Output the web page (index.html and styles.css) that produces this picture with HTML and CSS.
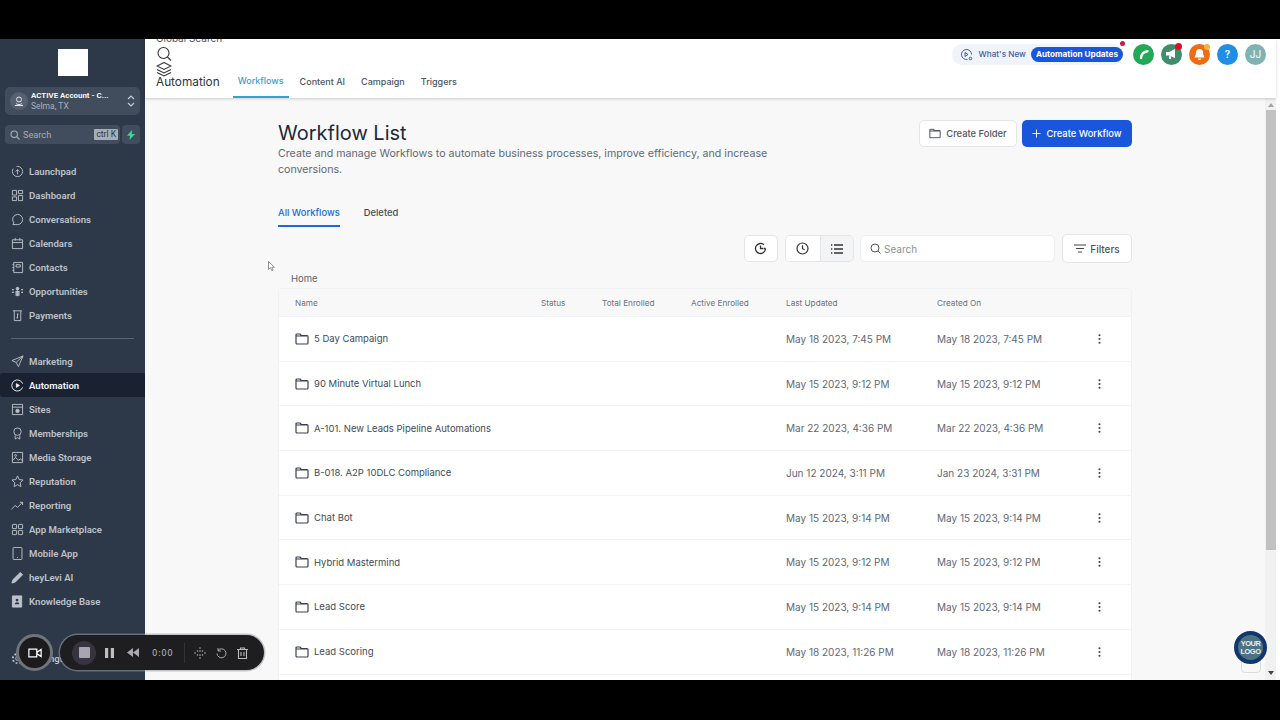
FILE: index.html
```html
<!DOCTYPE html>
<html lang="en">
    <head>
        <meta charset="UTF-8">
        <meta name="viewport" content="width=device-width, initial-scale=1.0">
        <title>Workflow List</title>
        <link rel="stylesheet" href="styles.css">
    </head>
    <body>
        <svg class="defs" width="0" height="0">
            <symbol id="folder" viewBox="0 0 14 12"><path d="M1 3V2a1 1 0 0 1 1-1h3l1.500 1.600H12a1 1 0 0 1 1 1V10a1 1 0 0 1-1 1H2a1 1 0 0 1-1-1V3h11" fill="none" stroke="currentColor" stroke-width="1.200" stroke-linejoin="round"/></symbol>
            <symbol id="kebab" viewBox="0 0 4 14"><circle cx="2" cy="2" r="1.400"/><circle cx="2" cy="7" r="1.400"/><circle cx="2" cy="12" r="1.400"/></symbol>
        </svg>

        <div class="letterbox"></div>

        <div class="app">
            <aside class="sidebar">
                <div class="logo"></div>

                <div class="account">
                    <span class="account-icon">
                        <svg width="12" height="12" viewBox="0 0 12 12" fill="none" stroke="currentColor"><circle cx="6" cy="4.500" r="2.500"/><path d="M2 10.500h8M3 8.500c2 1.500 4 1.500 6 0"/></svg>
                    </span>
                    <div class="account-text">
                        <div class="account-name">ACTIVE Account - C...</div>
                        <div class="account-place">Selma, TX</div>
                    </div>
                    <svg class="account-arrows" width="8" height="14" viewBox="0 0 8 14" fill="none" stroke="currentColor" stroke-width="1.200"><path d="M1 5l3-3 3 3M1 9l3 3 3-3"/></svg>
                </div>

                <div class="search-row">
                    <div class="side-search">
                        <svg width="10" height="10" viewBox="0 0 10 10" fill="none" stroke="currentColor" stroke-width="1.100"><circle cx="4.200" cy="4.200" r="3.200"/><path d="M6.700 6.700L9.500 9.500"/></svg>
                        <span>Search</span>
                        <kbd>ctrl K</kbd>
                    </div>
                    <div class="bolt">
                        <svg width="8" height="10" viewBox="0 0 8 10"><path d="M5 0L0 5.800h3L2.500 10 8 4H4.800z" fill="#37d79a"/></svg>
                    </div>
                </div>

                <nav class="nav nav-first">
                    <a><svg viewBox="0 0 14 14"><circle cx="7" cy="7" r="5.500" stroke-dasharray="20 4"/><path d="M7 10V5M5 7l2-2 2 2"/></svg>Launchpad</a>
                    <a><svg viewBox="0 0 14 14"><path d="M1.500 1.500h4.500v5h-4.500zM8 1.500h4.500v3.500H8zM8 7h4.500v5.500H8zM1.500 8.500h4.500v4h-4.500z"/></svg>Dashboard</a>
                    <a><svg viewBox="0 0 14 14"><path d="M7 1.500a5.500 5.500 0 0 1 0 11H2l1-2a5.500 5.500 0 0 1 4-9z"/></svg>Conversations</a>
                    <a><svg viewBox="0 0 14 14"><path d="M1.500 3h11v9.500h-11zM1.500 6h11M4.500 1v3M9.500 1v3"/></svg>Calendars</a>
                    <a><svg viewBox="0 0 14 14"><path d="M3 1.500h9.500v11H3zM1.500 4H3M1.500 7H3M1.500 10H3M5.500 4h4.500v2.500H5.500z"/></svg>Contacts</a>
                    <a><svg viewBox="0 0 14 14"><circle cx="7" cy="4" r="1.500" fill="currentColor"/><path d="M5.500 7h3v4h-3zM1 5h2M1 8h2M11 5h2M11 8h2M7 6v6" stroke-width="1.300"/></svg>Opportunities</a>
                    <a><svg viewBox="0 0 14 14"><path d="M2 2h10M3.500 2v10.500h7V2M7 5v5M5.800 9.500h1.800M6.400 5.500h1.800"/></svg>Payments</a>
                </nav>

                <div class="nav-divider"></div>

                <nav class="nav">
                    <a><svg viewBox="0 0 14 14"><path d="M13 1L1 6l4.500 2L8 12.500zM5.500 8L13 1"/></svg>Marketing</a>
                    <a class="active"><svg viewBox="0 0 14 14"><path d="M12.500 5A6 6 0 1 0 12.500 9"/><path d="M5.800 5l3.200 2-3.200 2z" fill="currentColor"/></svg>Automation</a>
                    <a><svg viewBox="0 0 14 14"><path d="M1.500 1.500h11v11h-11zM1.500 4.500h11"/><circle cx="7" cy="8.500" r="1.800" fill="currentColor"/></svg>Sites</a>
                    <a><svg viewBox="0 0 14 14"><circle cx="7" cy="5" r="4"/><path d="M4.500 9v4l2.500-1.500L9.500 13V9"/></svg>Memberships</a>
                    <a><svg viewBox="0 0 14 14"><path d="M1.500 1.500h11v11h-11zM1.500 10l3.500-3 3 3 2-1.500 2.500 2"/><circle cx="5" cy="4.800" r="1"/></svg>Media Storage</a>
                    <a><svg viewBox="0 0 14 14"><path d="M7 1l1.800 3.900 4.200.5-3.100 2.900.8 4.200L7 10.400l-3.700 2.100.8-4.200L1 5.400l4.200-.5z"/></svg>Reputation</a>
                    <a><svg viewBox="0 0 14 14"><path d="M.5 11l4-4 2.500 2 5.500-5.500M9.500 3.500h3v3"/></svg>Reporting</a>
                    <a><svg viewBox="0 0 14 14"><path d="M2 1.500h3.500a.5.5 0 0 1 .5.500v3.500a.5.5 0 0 1-.5.500H2a.5.5 0 0 1-.5-.5V2a.5.5 0 0 1 .5-.5zM8.500 1.500H12a.5.5 0 0 1 .5.500v3.500a.5.5 0 0 1-.5.500H8.500a.5.5 0 0 1-.5-.5V2a.5.5 0 0 1 .5-.5zM2 8h3.500a.5.5 0 0 1 .5.500V12a.5.5 0 0 1-.5.500H2a.5.5 0 0 1-.5-.5V8.500A.5.5 0 0 1 2 8zM8.500 8H12a.5.5 0 0 1 .5.500V12a.5.5 0 0 1-.5.500H8.500A.5.5 0 0 1 8 12V8.500a.5.5 0 0 1 .5-.5z"/></svg>App Marketplace</a>
                    <a><svg viewBox="0 0 14 14"><path d="M3 .5h8a.8.8 0 0 1 .8.800v11.400a.8.8 0 0 1-.8.800H3a.8.8 0 0 1-.8-.8V1.300A.8.8 0 0 1 3 .5zM6.500 11.300h1"/></svg>Mobile App</a>
                    <a><svg viewBox="0 0 14 14"><path d="M1 13l1-3.500L10 1.500l2.500 2.500-8 8z" fill="currentColor"/></svg>heyLevi AI</a>
                    <a><svg viewBox="0 0 14 14"><path d="M1.500 1h10v12h-10z" fill="currentColor"/><circle cx="6.500" cy="5.500" r="1.500" fill="#2d3848" stroke="none"/><path d="M4 10c0-3 5-3 5 0z" fill="#2d3848" stroke="none"/></svg>Knowledge Base</a>
                </nav>

                <a class="settings">
                    <svg viewBox="0 0 14 14"><circle cx="7" cy="7" r="2"/><circle cx="7" cy="7" r="5" stroke-width="2" stroke-dasharray="2 1.900"/></svg>Settings
                </a>
            </aside>

            <div class="page">
                <header class="topbar">
                    <div class="top-left">
                        <div class="global-search">Global Search</div>
                        <svg class="top-icon" width="16" height="16" viewBox="0 0 16 16" fill="none" stroke="#333" stroke-width="1.100"><circle cx="7.500" cy="7" r="5.500"/><path d="M11.500 11l3.500 3.500"/></svg>
                        <svg class="top-icon" width="16" height="15" viewBox="0 0 16 15" fill="none" stroke="#333" stroke-width="1.100"><path d="M8 .5l7 3.500-7 3.500L1 4zM1 7.500L8 11l7-3.500M1 10.500L8 14l7-3.500"/></svg>
                        <div class="top-nav">
                            <div class="app-name">Automation</div>
                            <a class="top-tab current">Workflows</a>
                            <a class="top-tab">Content AI</a>
                            <a class="top-tab">Campaign</a>
                            <a class="top-tab">Triggers</a>
                        </div>
                    </div>

                    <div class="top-right">
                        <div class="whats-new">
                            <svg width="13" height="13" viewBox="0 0 13 13" fill="none" stroke="#3f5fa8" stroke-width="1"><path d="M11.500 6.500a5 5 0 1 0-4 4.900"/><path d="M5 4.500l3 2-3 2z"/><circle cx="10.500" cy="10.500" r="1.300"/></svg>
                            <span>What's New</span>
                            <b class="updates">Automation Updates</b>
                            <i class="dot dot-news"></i>
                        </div>
                        <span class="round green">
                            <svg width="12" height="12" viewBox="0 0 12 12"><path d="M3 10C3 6.500 5.800 3.500 9.500 3.200" fill="none" stroke="#fff" stroke-width="2.400" stroke-linecap="round"/></svg>
                        </span>
                        <span class="round teal">
                            <svg width="13" height="12" viewBox="0 0 13 12"><path d="M1 4h3l6-3v9L4 7.500H1zM4 8v3h2V8.500" fill="#fff"/></svg>
                            <i class="dot dot-red"></i>
                        </span>
                        <span class="round orange">
                            <svg width="13" height="13" viewBox="0 0 13 13"><path d="M6.500 1a3.500 3.500 0 0 1 3.500 3.500c0 3 1.500 4 1.500 5h-10c0-1 1.500-2 1.500-5A3.500 3.500 0 0 1 6.500 1zM5 10.500h3a1.500 1.500 0 0 1-3 0z" fill="#fff"/></svg>
                            <i class="dot dot-yellow"></i>
                        </span>
                        <span class="round blue">?</span>
                        <span class="round avatar">JJ</span>
                    </div>
                </header>

                <main class="content">
                    <div class="wrap">
                        <div class="title-row">
                            <div>
                                <h1>Workflow List</h1>
                                <p>Create and manage Workflows to automate business processes, improve efficiency, and increase conversions.</p>
                            </div>
                            <div class="title-actions">
                                <button class="btn btn-white">
                                    <svg width="12" height="11" viewBox="0 0 14 12"><use href="#folder"/></svg>
                                    Create Folder
                                </button>
                                <button class="btn btn-blue">
                                    <svg width="9" height="9" viewBox="0 0 10 10" fill="none" stroke="#fff" stroke-width="1"><path d="M5 .5v9M.5 5h9"/></svg>
                                    Create Workflow
                                </button>
                            </div>
                        </div>

                        <div class="tabs">
                            <a class="tab current">All Workflows</a>
                            <a class="tab">Deleted</a>
                        </div>

                        <div class="tools">
                            <button class="tool single">
                                <svg width="13" height="13" viewBox="0 0 13 13" fill="none" stroke="#333" stroke-width="1.300"><path d="M11.500 6.500a5 5 0 1 1-1.500-3.600M6.500 3.500v3h2.500M11.500 6.500l-2 0"/></svg>
                            </button>
                            <div class="toggle">
                                <button class="tool">
                                    <svg width="13" height="13" viewBox="0 0 13 13" fill="none" stroke="#333" stroke-width="1.200"><circle cx="6.500" cy="6.500" r="5.500"/><path d="M6.500 3.300v3.400l2.200 1"/></svg>
                                </button>
                                <button class="tool selected">
                                    <svg width="12" height="10" viewBox="0 0 12 10" fill="none" stroke="#333" stroke-width="1.300"><path d="M3 1h9M3 5h9M3 9h9M0 1h1.300M0 5h1.300M0 9h1.300"/></svg>
                                </button>
                            </div>
                            <div class="list-search">
                                <svg width="11" height="11" viewBox="0 0 11 11" fill="none" stroke="#555" stroke-width="1"><circle cx="5" cy="5" r="4"/><path d="M8 8l2.500 2.500"/></svg>
                                <span>Search</span>
                            </div>
                            <button class="btn btn-white btn-filters">
                                <svg width="12" height="9" viewBox="0 0 12 9" fill="none" stroke="#444" stroke-width="1.100"><path d="M0 1h12M2 4.500h8M4 8h4"/></svg>
                                Filters
                            </button>
                        </div>

                        <div class="crumb">Home</div>

                        <div class="table">
                            <div class="row head">
                                <span>Name</span><span>Status</span><span>Total Enrolled</span><span>Active Enrolled</span><span>Last Updated</span><span>Created On</span><span></span>
                            </div>
                            <div class="row">
                                <span class="name"><svg width="14" height="12"><use href="#folder"/></svg>5 Day Campaign</span><span></span><span></span><span></span><span>May 18 2023, 7:45 PM</span><span>May 18 2023, 7:45 PM</span><svg class="kebab" width="3" height="12"><use href="#kebab"/></svg>
                            </div>
                            <div class="row">
                                <span class="name"><svg width="14" height="12"><use href="#folder"/></svg>90 Minute Virtual Lunch</span><span></span><span></span><span></span><span>May 15 2023, 9:12 PM</span><span>May 15 2023, 9:12 PM</span><svg class="kebab" width="3" height="12"><use href="#kebab"/></svg>
                            </div>
                            <div class="row">
                                <span class="name"><svg width="14" height="12"><use href="#folder"/></svg>A-101. New Leads Pipeline Automations</span><span></span><span></span><span></span><span>Mar 22 2023, 4:36 PM</span><span>Mar 22 2023, 4:36 PM</span><svg class="kebab" width="3" height="12"><use href="#kebab"/></svg>
                            </div>
                            <div class="row">
                                <span class="name"><svg width="14" height="12"><use href="#folder"/></svg>B-018. A2P 10DLC Compliance</span><span></span><span></span><span></span><span>Jun 12 2024, 3:11 PM</span><span>Jan 23 2024, 3:31 PM</span><svg class="kebab" width="3" height="12"><use href="#kebab"/></svg>
                            </div>
                            <div class="row">
                                <span class="name"><svg width="14" height="12"><use href="#folder"/></svg>Chat Bot</span><span></span><span></span><span></span><span>May 15 2023, 9:14 PM</span><span>May 15 2023, 9:14 PM</span><svg class="kebab" width="3" height="12"><use href="#kebab"/></svg>
                            </div>
                            <div class="row">
                                <span class="name"><svg width="14" height="12"><use href="#folder"/></svg>Hybrid Mastermind</span><span></span><span></span><span></span><span>May 15 2023, 9:12 PM</span><span>May 15 2023, 9:12 PM</span><svg class="kebab" width="3" height="12"><use href="#kebab"/></svg>
                            </div>
                            <div class="row">
                                <span class="name"><svg width="14" height="12"><use href="#folder"/></svg>Lead Score</span><span></span><span></span><span></span><span>May 15 2023, 9:14 PM</span><span>May 15 2023, 9:14 PM</span><svg class="kebab" width="3" height="12"><use href="#kebab"/></svg>
                            </div>
                            <div class="row">
                                <span class="name"><svg width="14" height="12"><use href="#folder"/></svg>Lead Scoring</span><span></span><span></span><span></span><span>May 18 2023, 11:26 PM</span><span>May 18 2023, 11:26 PM</span><svg class="kebab" width="3" height="12"><use href="#kebab"/></svg>
                            </div>
                            <div class="row"></div>
                        </div>
                    </div>

                    <div class="scrollbar">
                        <i class="arrow-up"></i>
                        <div class="thumb"></div>
                        <i class="arrow-down"></i>
                    </div>
                </main>
            </div>

            <svg class="cursor" width="7" height="11" viewBox="0 0 7 11"><path d="M.5.500v8l2-1.800 1.300 3 1.300-.6-1.300-2.900h2.600z" fill="#fff" stroke="#666" stroke-width=".7"/></svg>

            <div class="logo-badge"><span>YOUR<br>LOGO</span></div>
            <div class="chat-tab"></div>

            <div class="camera">
                <svg width="14" height="10" viewBox="0 0 16 11" fill="none" stroke="#fff" stroke-width="1.400"><path d="M1 1h9v9H1zM10.500 4.500L15 1.500v8l-4.500-3"/></svg>
            </div>
            <div class="recorder">
                <span class="stop"><i></i></span>
                <svg width="9" height="10" viewBox="0 0 9 10" fill="#bdbdc5"><path d="M0 0h3.200v10H0zM5.800 0H9v10H5.800z"/></svg>
                <svg class="rewind" width="12" height="9" viewBox="0 0 12 9" fill="#a9a9b0"><path d="M6 0v9L0 4.500zM12 0v9L6 4.500z"/></svg>
                <span class="time">0:00</span>
                <i class="rec-sep"></i>
                <div class="rec-tools">
                    <svg width="12" height="12" viewBox="0 0 12 12" fill="#aaa"><circle cx="6" cy="1" r=".8"/><circle cx="6" cy="4" r=".8"/><circle cx="6" cy="8" r=".8"/><circle cx="6" cy="11" r=".8"/><circle cx="3.500" cy="4" r=".8"/><circle cx="3.500" cy="8" r=".8"/><circle cx="8.500" cy="4" r=".8"/><circle cx="8.500" cy="8" r=".8"/><circle cx="1" cy="6" r=".8"/><circle cx="11" cy="6" r=".8"/></svg>
                    <svg width="11" height="12" viewBox="0 0 11 12" fill="none" stroke="#aaa" stroke-width="1"><path d="M2 3.500a4.500 4.500 0 1 1-1 3M2 1v3h3"/></svg>
                    <svg width="11" height="12" viewBox="0 0 11 12" fill="none" stroke="#bbb" stroke-width="1.100"><path d="M0 2.500h11M3.500 2.500V1h4v1.500M1.500 2.500v9h8v-9M4 5v4M7 5v4"/></svg>
                </div>
            </div>
        </div>

        <div class="letterbox bottom"></div>
    </body>
</html>
```

FILE: styles.css
```css
* {
    margin: 0;
    padding: 0;
    box-sizing: border-box;
}

html, body {
    width: 1280px;
    height: 720px;
    overflow: hidden;
    background-color: #000;
    font-family: Inter, "Liberation Sans", sans-serif;
}

a {
    display: block;
}

button {
    font-family: inherit;
}

.defs {
    display: block;
    height: 0;
}

.letterbox {
    height: 39px;
    background-color: #000;
}

.letterbox.bottom {
    height: 40px;
}

.app {
    position: relative;
    display: flex;
    height: 641px;
    overflow: hidden;
    background-color: #fff;
}

/* sidebar */
.sidebar {
    width: 145px;
    flex-shrink: 0;
    background-color: #2d3848;
    font-family: Roboto, "Liberation Sans", sans-serif;
    display: flex;
    flex-direction: column;
}

.logo {
    width: 30px;
    height: 27px;
    margin: 10px 0 0 58px;
    background-color: #fff;
}

.account {
    display: flex;
    align-items: center;
    margin: 11px 5px 0;
    height: 28px;
    padding: 0 5px 0 5px;
    border-radius: 5px;
    background-color: #414c5c;
}

.account-icon {
    display: flex;
    align-items: center;
    justify-content: center;
    width: 18px;
    height: 18px;
    border-radius: 50%;
    background-color: #566071;
    color: #e4e7ec;
}

.account-text {
    flex: 1;
    margin-left: 3px;
    min-width: 0;
}

.account-name {
    font-size: 7.900px;
    font-weight: 700;
    line-height: 10px;
    color: #f2f4f7;
    white-space: nowrap;
}

.account-place {
    font-size: 8.500px;
    line-height: 10px;
    color: #a8b0bc;
}

.account-arrows {
    color: #c6cbd3;
}

.search-row {
    display: flex;
    gap: 2px;
    margin: 10px 5px 0;
}

.side-search {
    flex: 1;
    display: flex;
    align-items: center;
    height: 19px;
    padding: 0 2px 0 5px;
    border-radius: 4px;
    background-color: #414c5c;
    color: #a5adb9;
    font-size: 9.200px;
}

.side-search span {
    flex: 1;
    margin-left: 3px;
}

.side-search kbd {
    padding: 0 2px;
    font-family: inherit;
    font-size: 8.500px;
    line-height: 11px;
    color: #2d3848;
    background-color: #a8aeb8;
    border-radius: 1px;
}

.bolt {
    display: flex;
    align-items: center;
    justify-content: center;
    width: 18px;
    height: 19px;
    border-radius: 4px;
    background-color: #414c5c;
}

.nav-first {
    margin-top: 15px;
}

.nav a,
.settings {
    display: flex;
    align-items: center;
    height: 24px;
    padding-left: 11px;
    font-size: 9.600px;
    font-weight: 600;
    color: #bcc2cb;
    white-space: nowrap;
}

.nav svg,
.settings svg {
    width: 13px;
    height: 13px;
    margin-right: 5px;
    fill: none;
    stroke: currentColor;
    stroke-width: 1;
    flex-shrink: 0;
}

.nav a.active {
    background-color: #1a2130;
    color: #f2f4f7;
    border-radius: 3px 0 0 3px;
}

.nav-divider {
    height: 1px;
    margin: 11px 11px 10px;
    background-color: #5a6474;
}

.settings {
    margin-top: auto;
    margin-bottom: 10px;
}

/* top header */
.page {
    flex: 1;
    display: flex;
    flex-direction: column;
    min-width: 0;
    background-color: #fff;
}

.topbar {
    display: flex;
    justify-content: space-between;
    height: 59px;
    width: 1131px;
    overflow: hidden;
    background-color: #fff;
    box-shadow: 0 1px 3px rgba(0,0,0,0.18);
    position: relative;
    z-index: 1;
}

.top-left {
    padding-left: 11px;
}

.global-search {
    margin-top: -8px;
    height: 15px;
    font-size: 10px;
    line-height: 14px;
    color: #555;
}

.top-icon {
    display: block;
}

.top-nav {
    display: flex;
    align-items: flex-start;
    margin-top: -3px;
}

.app-name {
    font-size: 11.800px;
    line-height: 16px;
    color: #2b3440;
    margin-right: 13px;
}

.top-tab {
    font-size: 9px;
    font-weight: 500;
    line-height: 14px;
    color: #4b5563;
    padding: 1px 5px 7px;
    margin-right: 6px;
    border-bottom: 2px solid transparent;
}

.top-tab.current {
    color: #3a9fc9;
    border-bottom-color: #3a9fc9;
    padding: 0 5px 8px;
}

.top-right {
    display: flex;
    align-items: center;
    gap: 7px;
    height: 30px;
    margin: 0 10px 0 0;
}

.whats-new {
    position: relative;
    display: flex;
    align-items: center;
    height: 21px;
    margin-right: 3px;
    padding-left: 8px;
    border-radius: 11px;
    background-color: #eff3fa;
    font-size: 8.200px;
    font-weight: 500;
    color: #3f5fa8;
    white-space: nowrap;
}

.whats-new svg {
    margin-right: 6px;
}

.updates {
    margin-left: 5px;
    padding: 0 5px;
    height: 15px;
    line-height: 15px;
    border-radius: 8px;
    background-color: #1a56db;
    color: #fff;
    font-weight: 700;
    font-size: 8.200px;
}

.round {
    position: relative;
    display: flex;
    align-items: center;
    justify-content: center;
    width: 21px;
    height: 21px;
    border-radius: 50%;
    color: #fff;
    font-size: 10px;
    font-weight: 600;
}

.green { background-color: #22a957; }
.teal { background-color: #3f8d6c; }
.orange { background-color: #ee6c14; }
.blue { background-color: #1f8ee6; }
.avatar { background-color: #7fb3b3; font-weight: 400; }

.dot {
    position: absolute;
    border-radius: 50%;
}

.dot-news {
    top: -3px;
    right: -2px;
    width: 5px;
    height: 5px;
    background-color: #c81e3c;
}

.dot-red {
    top: -1px;
    right: 0;
    width: 7px;
    height: 7px;
    background-color: #d90f23;
}

.dot-yellow {
    top: 0;
    right: 0;
    width: 6px;
    height: 6px;
    background-color: #f5b335;
}

/* page content */
.content {
    flex: 1;
    display: flex;
    min-height: 0;
    background-color: #f8f8f8;
    overflow: hidden;
    width: 1131px;
}

.wrap {
    width: 854px;
    margin-left: 133px;
}

.title-row {
    display: flex;
    justify-content: space-between;
    padding-top: 22px;
}

h1 {
    margin-top: 1px;
    font-size: 20px;
    font-weight: 400;
    line-height: 24px;
    color: #1f2937;
}

.title-row p {
    width: 510px;
    margin-top: 1px;
    font-size: 10.650px;
    line-height: 16px;
    color: #5f6875;
}

.title-actions {
    display: flex;
    gap: 5px;
    align-items: flex-start;
}

.btn {
    display: flex;
    align-items: center;
    justify-content: center;
    gap: 5px;
    height: 27px;
    border-radius: 5px;
    font-size: 9.400px;
    font-weight: 500;
    cursor: pointer;
}

.btn-white {
    width: 98px;
    background-color: #fff;
    border: 1px solid #e3e5e8;
    color: #4b5563;
}

.btn-blue {
    width: 110px;
    background-color: #1a56db;
    border: none;
    color: #fff;
}

.tabs {
    display: flex;
    gap: 24px;
    margin-top: 28px;
}

.tab {
    font-size: 9.400px;
    font-weight: 500;
    line-height: 14px;
    color: #414b58;
    padding-bottom: 5px;
    border-bottom: 2px solid transparent;
}

.tab.current {
    color: #1a6ad9;
    border-bottom-color: #1a6ad9;
}

.tools {
    display: flex;
    align-items: center;
    margin-top: 7px;
    height: 29px;
}

.tool {
    display: flex;
    align-items: center;
    justify-content: center;
    width: 34px;
    height: 27px;
    background-color: #fff;
    border: none;
}

.tool.single {
    margin-left: 465.500px;
    width: 34.500px;
    border: 1px solid #e3e5e8;
    border-radius: 5px;
}

.toggle {
    display: flex;
    margin-left: 7px;
    border: 1px solid #e3e5e8;
    border-radius: 5px;
    overflow: hidden;
}

.toggle .tool {
    width: 33.500px;
    height: 25px;
}

.tool.selected {
    background-color: #f2f4f6;
    border-left: 1px solid #e3e5e8;
}

.list-search {
    display: flex;
    align-items: center;
    gap: 3px;
    width: 195px;
    height: 27px;
    margin-left: 6px;
    padding-left: 9px;
    background-color: #fff;
    border: 1px solid #eceef0;
    border-radius: 5px;
    font-size: 10px;
    color: #8a919c;
}

.btn-filters {
    width: 70px;
    height: 29px;
    margin-left: 7px;
    gap: 4px;
    font-size: 10px;
}

.crumb {
    margin: 9px 0 0 13px;
    font-size: 9.500px;
    line-height: 14px;
    color: #5a6370;
}

.table {
    margin-top: 2px;
    border: 1px solid #f0f1f2;
    border-radius: 4px 4px 0 0;
    background-color: #fff;
}

.row {
    display: grid;
    grid-template-columns: 246px 61px 89px 95px 151px 160px 10px;
    align-items: center;
    height: 44.700px;
    padding-left: 16px;
    border-bottom: 1px solid #f2f3f4;
    font-size: 10px;
    color: #5f6875;
    white-space: nowrap;
}

.row.head {
    height: 28px;
    background-color: #f8f8f8;
    font-size: 8.200px;
    font-weight: 400;
    color: #6b7280;
}

.name {
    display: flex;
    align-items: center;
    gap: 5px;
    font-size: 9.500px;
    color: #414b58;
}

.name svg {
    color: #3a414c;
}

.kebab {
    fill: #444;
    margin-left: 1px;
}

/* scrollbar */
.scrollbar {
    display: flex;
    flex-direction: column;
    align-items: center;
    flex-shrink: 0;
    width: 11px;
    margin-left: 133px;
    background-color: #f1f1f1;
}

.thumb {
    width: 10px;
    height: 440px;
    margin-top: 3px;
    background-color: #c1c1c1;
}

.arrow-up,
.arrow-down {
    width: 0;
    height: 0;
    border-left: 3px solid transparent;
    border-right: 3px solid transparent;
}

.arrow-up {
    margin-top: 5px;
    border-bottom: 4px solid #a3a3a3;
}

.arrow-down {
    margin-top: auto;
    margin-bottom: 5px;
    border-top: 4px solid #444;
}

/* things floating over the page */
.cursor {
    position: absolute;
    left: 268px;
    top: 222px;
}

.logo-badge {
    position: absolute;
    left: 1234px;
    top: 592px;
    display: flex;
    align-items: center;
    justify-content: center;
    width: 33px;
    height: 33px;
    border-radius: 50%;
    background-color: #4e7282;
    border: 4px solid #12376f;
    z-index: 2;
}

.logo-badge span {
    font-family: "Liberation Sans", sans-serif;
    font-size: 7.500px;
    font-weight: 700;
    letter-spacing: -0.5px;
    line-height: 8px;
    text-align: center;
    color: #e8eef2;
}

.chat-tab {
    position: absolute;
    left: 1241px;
    top: 622px;
    width: 20px;
    height: 12px;
    background-color: #f8f8f8;
    border: 1px solid #dcdcdc;
    border-radius: 0 0 4px 4px;
}

.camera {
    position: absolute;
    left: 16px;
    top: 595px;
    display: flex;
    align-items: center;
    justify-content: center;
    width: 37px;
    height: 37px;
    border-radius: 50%;
    background-color: #1b1b1d;
    border: 3px solid #6f7478;
}

.recorder {
    position: absolute;
    left: 60px;
    top: 596px;
    display: flex;
    align-items: center;
    gap: 14px;
    width: 204px;
    height: 35px;
    padding-left: 12px;
    border-radius: 18px;
    background-color: #1e1e20;
    box-shadow: 0 0 0 1.500px rgba(150,155,160,0.55);
}

.stop {
    display: flex;
    align-items: center;
    justify-content: center;
    width: 24px;
    height: 24px;
    margin-right: -5px;
    border-radius: 50%;
    background-color: #37333f;
}

.stop i {
    width: 11px;
    height: 11px;
    border-radius: 1px;
    background-color: #a8a4b0;
}

.rewind {
    margin-left: -1px;
}

.time {
    margin-left: -1px;
    font-family: "DejaVu Sans", sans-serif;
    font-size: 8.500px;
    letter-spacing: 0.5px;
    color: #b5b5b8;
}

.rec-sep {
    width: 1px;
    height: 20px;
    margin: 0 -5px 0 -3px;
    background-color: #333;
}

.rec-tools {
    display: flex;
    align-items: center;
    gap: 10px;
}
```
